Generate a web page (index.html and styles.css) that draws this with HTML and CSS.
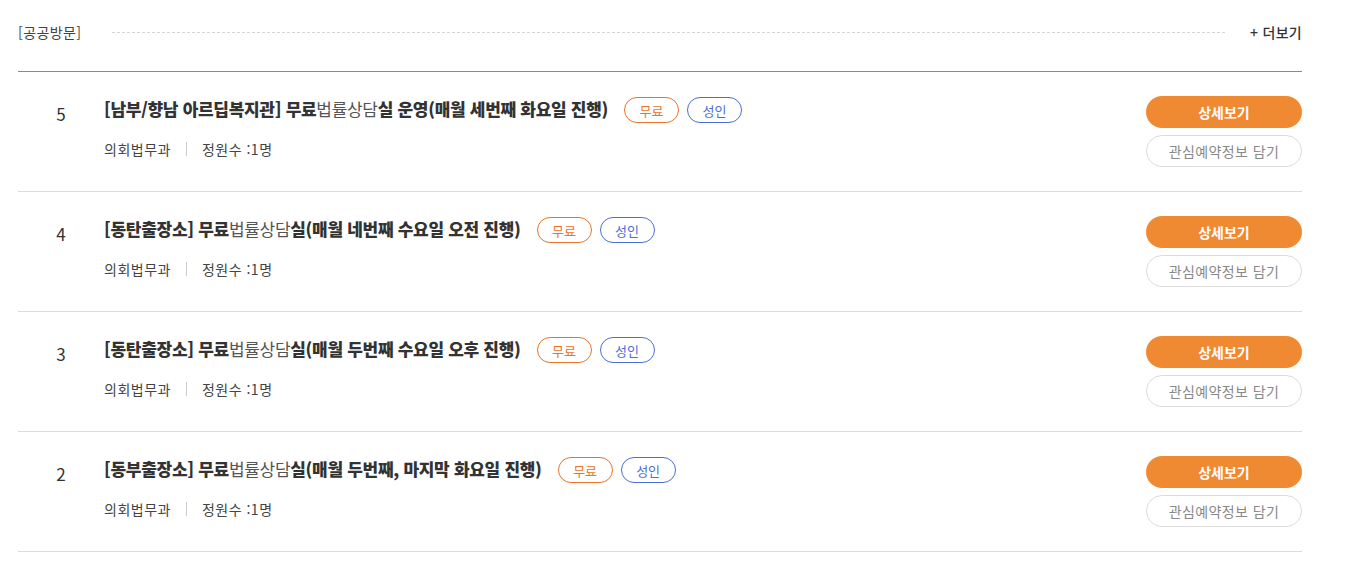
FILE: index.html
```html
<!DOCTYPE html>
<html lang="ko">
<head>
<meta charset="utf-8">
<title>공공방문</title>
<link rel="stylesheet" href="styles.css">
</head>
<body>
<div class="wrap">
  <div class="head">
    <span class="head-title">[공공방문]</span>
    <span class="head-line"></span>
    <a class="head-more">+ 더보기</a>
  </div>
  <ul class="list">
    <li class="row">
      <div class="num">5</div>
      <div class="info">
        <div class="title-line">
          <span class="title">[남부/향남 아르딥복지관] 무료<span class="lt">법률상담</span>실 운영(매월 세번째 화요일 진행)</span>
          <span class="tag tag-free">무료</span><span class="tag tag-adult">성인</span>
        </div>
        <div class="meta"><span>의회법무과</span><span class="bar"></span><span>정원수 :1명</span></div>
      </div>
      <div class="btns"><a class="btn btn-main">상세보기</a><a class="btn btn-sub">관심예약정보 담기</a></div>
    </li>
    <li class="row">
      <div class="num">4</div>
      <div class="info">
        <div class="title-line">
          <span class="title">[동탄출장소] 무료<span class="lt">법률상담</span>실(매월 네번째 수요일 오전 진행)</span>
          <span class="tag tag-free">무료</span><span class="tag tag-adult">성인</span>
        </div>
        <div class="meta"><span>의회법무과</span><span class="bar"></span><span>정원수 :1명</span></div>
      </div>
      <div class="btns"><a class="btn btn-main">상세보기</a><a class="btn btn-sub">관심예약정보 담기</a></div>
    </li>
    <li class="row">
      <div class="num">3</div>
      <div class="info">
        <div class="title-line">
          <span class="title">[동탄출장소] 무료<span class="lt">법률상담</span>실(매월 두번째 수요일 오후 진행)</span>
          <span class="tag tag-free">무료</span><span class="tag tag-adult">성인</span>
        </div>
        <div class="meta"><span>의회법무과</span><span class="bar"></span><span>정원수 :1명</span></div>
      </div>
      <div class="btns"><a class="btn btn-main">상세보기</a><a class="btn btn-sub">관심예약정보 담기</a></div>
    </li>
    <li class="row">
      <div class="num">2</div>
      <div class="info">
        <div class="title-line">
          <span class="title">[동부출장소] 무료<span class="lt">법률상담</span>실(매월 두번째, 마지막 화요일 진행)</span>
          <span class="tag tag-free">무료</span><span class="tag tag-adult">성인</span>
        </div>
        <div class="meta"><span>의회법무과</span><span class="bar"></span><span>정원수 :1명</span></div>
      </div>
      <div class="btns"><a class="btn btn-main">상세보기</a><a class="btn btn-sub">관심예약정보 담기</a></div>
    </li>
  </ul>
</div>
</body>
</html>
```
FILE: styles.css
```css
* { box-sizing: border-box; }
body {
  margin: 0;
  background: #fff;
  font-family: "Noto Sans CJK KR", "Noto Sans", sans-serif;
  color: #333;
}
.wrap {
  width: 1284px;
  margin-left: 18px;
}
.head {
  display: flex;
  align-items: center;
  height: 20px;
  margin-top: 22px;
  margin-bottom: 29px;
}
.head-title {
  font-size: 14px;
  color: #444;
  letter-spacing: 0.4px;
}
.head-line {
  flex: 1;
  border-top: 1px dashed #d6d6d6;
  margin: 0 25px 0 31px;
}
.head-more {
  font-size: 14px;
  font-weight: 500;
  color: #333;
  letter-spacing: 0.3px;
}
.list {
  list-style: none;
  margin: 0;
  padding: 0;
  border-top: 1px solid #8a8a8a;
}
.row {
  display: flex;
  height: 120px;
  border-bottom: 1px solid #dcdcdc;
}
.num {
  width: 86px;
  text-align: center;
  font-size: 17px;
  color: #333;
  padding-top: 30px;
  line-height: 24px;
}
.info {
  flex: 1;
  padding-top: 23px;
}
.title-line {
  display: flex;
  align-items: center;
  height: 26px;
}
.title {
  font-size: 17px;
  font-weight: 800;
  color: #333;
  letter-spacing: -0.3px;
}
.lt { font-weight: 400; color: #555; }
.tag {
  display: inline-flex;
  align-items: center;
  justify-content: center;
  width: 55px;
  height: 26px;
  border-radius: 13px;
  font-size: 13px;
  border: 1px solid;
  margin-left: 8px;
  position: relative;
  top: 2px;
}
.tag-free {
  color: #e8732a;
  border-color: #e8732a;
  margin-left: 16px;
}
.tag-adult {
  color: #4a6fd4;
  border-color: #4a6fd4;
}
.meta {
  display: flex;
  align-items: center;
  margin-top: 18px;
  font-size: 14px;
  color: #444;
  height: 20px;
  letter-spacing: 0.5px;
}
.bar {
  width: 1px;
  height: 14px;
  background: #ccc;
  margin: 0 15px;
}
.btns {
  width: 156px;
  padding-top: 24px;
  display: flex;
  flex-direction: column;
  gap: 7px;
}
.btn {
  display: flex;
  align-items: center;
  justify-content: center;
  height: 32px;
  border-radius: 16px;
  font-size: 14px;
}
.btn-main {
  background: #f08a32;
  color: #fff;
  font-weight: 700;
}
.btn-sub {
  border: 1px solid #dcdcdc;
  color: #888;
  letter-spacing: 0.4px;
}
```
